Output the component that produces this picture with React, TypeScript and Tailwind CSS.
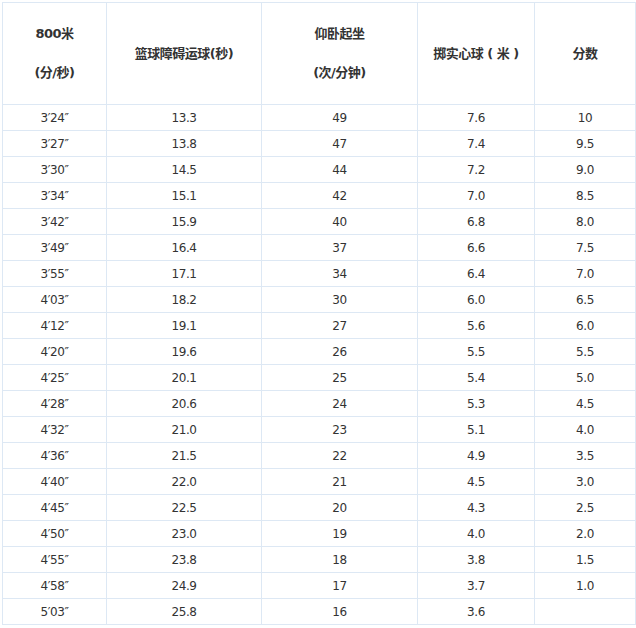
const rows: [string, string, string, string, string][] = [
  ["3′24″", "13.3", "49", "7.6", "10"],
  ["3′27″", "13.8", "47", "7.4", "9.5"],
  ["3′30″", "14.5", "44", "7.2", "9.0"],
  ["3′34″", "15.1", "42", "7.0", "8.5"],
  ["3′42″", "15.9", "40", "6.8", "8.0"],
  ["3′49″", "16.4", "37", "6.6", "7.5"],
  ["3′55″", "17.1", "34", "6.4", "7.0"],
  ["4′03″", "18.2", "30", "6.0", "6.5"],
  ["4′12″", "19.1", "27", "5.6", "6.0"],
  ["4′20″", "19.6", "26", "5.5", "5.5"],
  ["4′25″", "20.1", "25", "5.4", "5.0"],
  ["4′28″", "20.6", "24", "5.3", "4.5"],
  ["4′32″", "21.0", "23", "5.1", "4.0"],
  ["4′36″", "21.5", "22", "4.9", "3.5"],
  ["4′40″", "22.0", "21", "4.5", "3.0"],
  ["4′45″", "22.5", "20", "4.3", "2.5"],
  ["4′50″", "23.0", "19", "4.0", "2.0"],
  ["4′55″", "23.8", "18", "3.8", "1.5"],
  ["4′58″", "24.9", "17", "3.7", "1.0"],
  ["5′03″", "25.8", "16", "3.6", ""],
];

export default function App() {
  return (
    <div className="min-h-screen bg-white p-[2px] text-[#333] font-['DejaVu_Sans','Noto_Sans_CJK_SC',sans-serif] text-[12px] tracking-[-0.4px]">
      <table className="w-[633px] border-collapse table-fixed">
        <colgroup>
          <col className="w-[104px]" />
          <col className="w-[155px]" />
          <col className="w-[156px]" />
          <col className="w-[117px]" />
          <col className="w-[101px]" />
        </colgroup>
        <thead>
          {/* header cells */}
          <tr className="h-[102px] font-bold text-[13px] tracking-[-0.5px]">
            <th className="border border-[#dde8f4] text-center align-middle">
              <p className="leading-[20px]">800米</p>
              <p className="leading-[20px] mt-[19px]">(分/秒)</p>
            </th>
            <th className="border border-[#dde8f4] text-center align-middle leading-[20px]">篮球障碍运球(秒)</th>
            <th className="border border-[#dde8f4] text-center align-middle">
              <p className="leading-[20px]">仰卧起坐</p>
              <p className="leading-[20px] mt-[19px]">(次/分钟)</p>
            </th>
            <th className="border border-[#dde8f4] text-center align-middle leading-[20px]">掷实心球 ( 米 )</th>
            <th className="border border-[#dde8f4] text-center align-middle leading-[20px]">分数</th>
          </tr>
        </thead>
        <tbody>
          {rows.map((r, i) => (
            <tr key={i} className="h-[26px]">
              {r.map((c, j) => (
                <td key={j} className="border border-[#dde8f4] text-center align-middle leading-[20px] p-0">
                  {c}
                </td>
              ))}
            </tr>
          ))}
        </tbody>
      </table>
    </div>
  );
}
